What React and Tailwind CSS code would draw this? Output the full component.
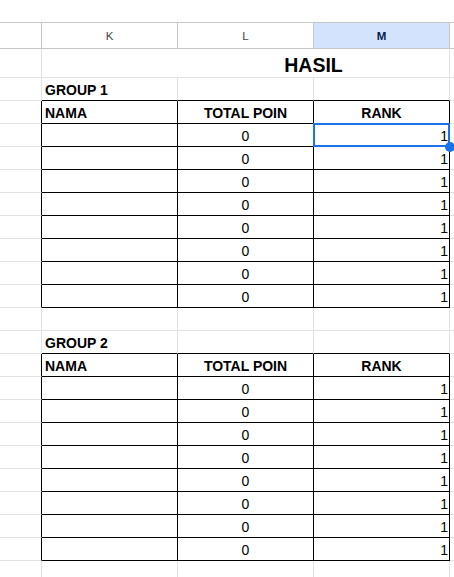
import React from 'react';

const font = { fontFamily: '"Liberation Sans", Arial, sans-serif' };

// one sheet row: J (partial), K, L, M, N (partial)
function Row({ h = 'h-[23px]', cells = [], boxed = false, bottomBlack = false, children }) {
  const line = boxed ? 'border-black' : 'border-[#e2e2e2]';
  const bottom = bottomBlack || boxed ? 'border-b-black' : 'border-b-[#e2e2e2]';
  return (
    <div className={`flex ${h}`}>
      <div className={`w-[42px] shrink-0 border-b border-r border-b-[#e2e2e2] ${boxed ? 'border-r-black' : 'border-r-[#e2e2e2]'}`} />
      {[0, 1, 2].map((i) => (
        <div
          key={i}
          className={`relative w-[136px] shrink-0 border-b border-r ${bottom} ${line} flex items-end pb-[2px] leading-4 text-[14px] text-black`}
        >
          {cells[i]}
        </div>
      ))}
      <div className="flex-1 border-b border-[#e2e2e2]" />
      {children}
    </div>
  );
}

function Group({ title, first }) {
  const rows = Array.from({ length: 8 });
  return (
    <>
      <Row bottomBlack cells={[<span className="pl-[3px] font-bold">{title}</span>]} />
      <Row
        boxed
        cells={[
          <span className="pl-[3px] font-bold">NAMA</span>,
          <span className="w-full text-center font-bold">TOTAL POIN</span>,
          <span className="w-full text-center font-bold">RANK</span>,
        ]}
      />
      {rows.map((_, i) => (
        <Row
          key={i}
          boxed
          cells={[
            null,
            <span className="w-full text-center">0</span>,
            <>
              <span className="w-full text-right pr-[1px]">1</span>
              {first && i === 0 && (
                <>
                  <div className="absolute -left-px -top-px w-[137px] h-[24px] border-2 border-[#1a73e8]" />
                  <div className="absolute -right-[6px] -bottom-[6px] w-[10px] h-[10px] rounded-full bg-[#1a73e8] z-10" />
                </>
              )}
            </>,
          ]}
        />
      ))}
    </>
  );
}

export default function App() {
  return (
    <div className="w-[454px] h-[577px] overflow-hidden bg-white" style={font}>
      <div className="h-[22px]" />

      {/* column headers */}
      <div className="flex h-[27px] border-y border-[#c4c7c5] text-[11.5px] leading-[14px] text-[#444746]">
        <div className="w-[42px] shrink-0 border-r border-[#c4c7c5]" />
        <div className="w-[136px] shrink-0 border-r border-[#c4c7c5] flex items-center justify-center">K</div>
        <div className="w-[136px] shrink-0 border-r border-[#c4c7c5] flex items-center justify-center">L</div>
        <div className="w-[136px] shrink-0 border-r border-[#c4c7c5] bg-[#d3e3fd] flex items-center justify-center font-bold text-[#041e49]">M</div>
        <div className="flex-1" />
      </div>

      {/* HASIL row */}
      <div className="flex h-[29px]">
        <div className="w-[42px] shrink-0 border-b border-r border-[#e2e2e2]" />
        <div className="w-[408px] shrink-0 border-b border-r border-[#e2e2e2] flex items-end justify-center pb-[1px]">
          <span className="relative left-[68px] text-[19.5px] leading-[22px] font-bold text-black">HASIL</span>
        </div>
        <div className="flex-1 border-b border-[#e2e2e2]" />
      </div>

      <Group title="GROUP 1" first />
      <Row />
      <Group title="GROUP 2" />
      <Row h="h-[40px]" />
    </div>
  );
}
